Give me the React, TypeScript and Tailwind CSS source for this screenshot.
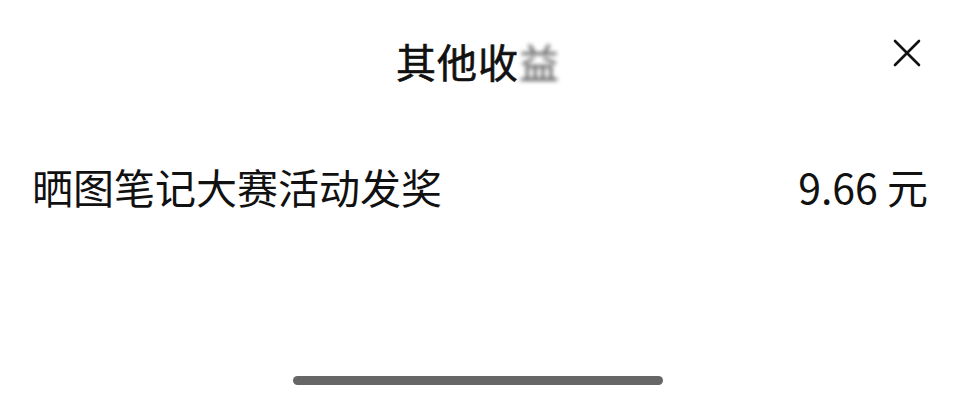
import React from "react";

const App: React.FC = () => {
  return (
    <div
      className="w-[956px] h-[400px] bg-white text-[#111] flex flex-col overflow-hidden"
      style={{ fontFamily: '"Noto Sans CJK SC", "Noto Sans", sans-serif' }}
    >
      {/* Header */}
      <div className="relative h-[124px] flex items-center justify-center pb-[2px]">
        <h1 className="text-[40px] leading-none font-normal tracking-[1px] [-webkit-text-stroke:0.6px_#111]">
          其他收<span className="blur-[2px] text-[#555] [-webkit-text-stroke:0]">益</span>
        </h1>
        <button className="absolute right-[34px] top-[38px] w-[30px] h-[30px] flex items-center justify-center">
          <svg width="30" height="30" viewBox="0 0 30 30" fill="none">
            <path d="M3 3 L27 27 M27 3 L3 27" stroke="#111" strokeWidth="2.6" strokeLinecap="round" />
          </svg>
        </button>
      </div>

      {/* Row */}
      <div className="flex items-center justify-between pl-[32px] pr-[28px] h-[124px]">
        <span className="text-[41px] leading-none">晒图笔记大赛活动发奖</span>
        <span className="text-[41px] leading-none">9.66 元</span>
      </div>

      {/* Home indicator */}
      <div className="flex-1 flex items-end justify-center pb-[15px]">
        <div className="w-[370px] h-[9px] rounded-full bg-[#666]" />
      </div>
    </div>
  );
};

export default App;
